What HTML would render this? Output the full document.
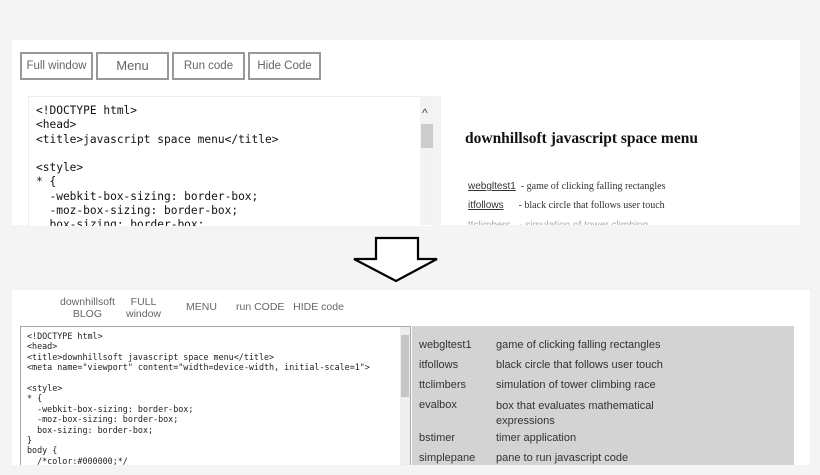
<!DOCTYPE html>
<html><head><style>
body{margin:0;width:820px;height:475px;background:#f4f4f4;position:relative;overflow:hidden;font-family:"Liberation Sans",sans-serif}
.a{position:absolute}
.btn{position:absolute;top:52px;height:28px;border:2px solid #999;box-sizing:border-box;background:#fff;color:#666;font-size:11.5px;text-align:center;line-height:24px}
pre{margin:0;font-family:"DejaVu Sans Mono","Liberation Mono",monospace}
.lst td{padding:0;height:20px;font-size:11px;color:#333;vertical-align:top}
</style></head><body>
<div class="a" style="left:12px;top:40px;width:788px;height:185px;background:#fff"></div>
<div class="btn" style="left:20px;width:73px">Full window</div>
<div class="btn" style="left:96px;width:73px;font-size:13px">Menu</div>
<div class="btn" style="left:172px;width:73px">Run code</div>
<div class="btn" style="left:248px;width:73px">Hide Code</div>
<div class="a" style="left:28px;top:96px;width:406px;height:129px;background:#fff;border-top:1px solid #eee;border-left:1px solid #eee;overflow:hidden">
<pre style="font-size:11.2px;line-height:14.3px;color:#111;padding:7px 0 0 7px">&lt;!DOCTYPE html&gt;
&lt;head&gt;
&lt;title&gt;javascript space menu&lt;/title&gt;

&lt;style&gt;
* {
  -webkit-box-sizing: border-box;
  -moz-box-sizing: border-box;
  box-sizing: border-box;</pre></div>
<div class="a" style="left:420px;top:96px;width:14px;height:129px;background:#f3f3f3"></div>
<div class="a" style="left:422px;top:106px;font-size:12px;color:#444">^</div>
<div class="a" style="left:421px;top:124px;width:12px;height:24px;background:#ccc"></div>
<div class="a" style="left:434px;top:96px;width:7px;height:129px;background:#f4f4f4"></div>
<div class="a" style="left:465px;top:130px;font-family:'Liberation Serif',serif;font-weight:bold;font-size:15.5px;color:#111">downhillsoft javascript space menu</div>
<div class="a" style="left:468px;top:181px;font-family:'Liberation Serif',serif;font-size:10px;color:#333"><u style="font-family:'Liberation Sans'">webgltest1</u> &nbsp;- game of clicking falling rectangles</div>
<div class="a" style="left:468px;top:200px;font-family:'Liberation Serif',serif;font-size:10px;color:#333"><u style="font-family:'Liberation Sans'">itfollows</u> &nbsp;&nbsp;&nbsp;&nbsp;&nbsp;- black circle that follows user touch</div>
<div class="a" style="left:468px;top:220px;width:200px;height:5px;overflow:hidden;font-size:10px;color:#aaa">ttclimbers &nbsp; - simulation of tower climbing</div>
<svg class="a" style="left:340px;top:225px" width="120" height="65"><path d="M36 13 H78 V34 H97 L56 56 L14 34 H36 Z" fill="#fff" stroke="#000" stroke-width="2.2"/></svg>
<div class="a" style="left:12px;top:290px;width:798px;height:175px;background:#fff"></div>
<div class="a" style="left:60px;top:296px;font-size:10.5px;color:#666;text-align:center;line-height:12px">downhillsoft<br>BLOG</div>
<div class="a" style="left:126px;top:296px;font-size:10.5px;color:#666;text-align:center;line-height:12px">FULL<br>window</div>
<div class="a" style="left:186px;top:301px;font-size:10.5px;color:#666">MENU</div>
<div class="a" style="left:236px;top:301px;font-size:10.5px;color:#666">run CODE&nbsp;&nbsp; HIDE code</div>
<div class="a" style="left:20px;top:326px;width:391px;height:139px;border:1px solid #9ab;border-bottom:none;box-sizing:border-box;overflow:hidden;background:#fff">
<pre style="font-size:8.4px;line-height:10.4px;color:#222;padding:4px 0 0 6px">&lt;!DOCTYPE html&gt;
&lt;head&gt;
&lt;title&gt;downhillsoft javascript space menu&lt;/title&gt;
&lt;meta name="viewport" content="width=device-width, initial-scale=1"&gt;

&lt;style&gt;
* {
  -webkit-box-sizing: border-box;
  -moz-box-sizing: border-box;
  box-sizing: border-box;
}
body {
  /*color:#000000;*/</pre></div>
<div class="a" style="left:400px;top:327px;width:10px;height:138px;background:#eee"></div>
<div class="a" style="left:401px;top:335px;width:8px;height:62px;background:#c6c6c6"></div>
<div class="a" style="left:412px;top:326px;width:382px;height:139px;background:#d3d3d3;overflow:hidden">
<table class="lst" style="position:absolute;left:7px;top:13px;border-collapse:collapse">
<tr><td style="width:77px">webgltest1</td><td>game of clicking falling rectangles</td></tr>
<tr><td>itfollows</td><td>black circle that follows user touch</td></tr>
<tr><td>ttclimbers</td><td>simulation of tower climbing race</td></tr>
<tr><td style="height:33px">evalbox</td><td style="height:33px;line-height:15px">box that evaluates mathematical<br>expressions</td></tr>
<tr><td>bstimer</td><td>timer application</td></tr>
<tr><td>simplepane</td><td>pane to run javascript code</td></tr>
</table></div>
</body></html>
